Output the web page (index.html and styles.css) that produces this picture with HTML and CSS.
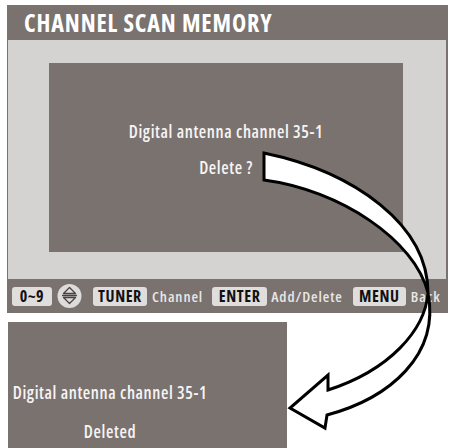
FILE: index.html
```html
<!DOCTYPE html>
<html>
<head>
<meta charset="utf-8">
<link rel="stylesheet" href="styles.css">
</head>
<body>
<div class="page">
  <div class="screen">
    <div class="title">CHANNEL SCAN MEMORY</div>
    <div class="body">
      <div class="dialog">
        <div class="line first">Digital antenna channel 35-1</div>
        <div class="line">Delete ?</div>
      </div>
    </div>
    <div class="bar">
      <span class="key k09">0~9</span>
      <span class="updown">
        <svg width="25" height="24" viewBox="0 0 25 24">
          <circle cx="12.5" cy="12" r="12" fill="#dedbdb"/>
          <path d="M5 11.5 H20 M6.5 9.5 L12.5 3.5 L18.5 9.5 Z M6.5 13.5 L12.5 19.5 L18.5 13.5 Z" fill="none" stroke="#4a4341" stroke-width="1.3" stroke-linejoin="round"/>
        </svg>
      </span>
      <span class="key ktuner">TUNER</span>
      <span class="label lchannel">Channel</span>
      <span class="key kenter">ENTER</span>
      <span class="label ladd">Add/Delete</span>
      <span class="key kmenu">MENU</span>
      <span class="label">Back</span>
    </div>
  </div>
  <div class="result">
    <div class="result-text">
      <div class="line first">Digital antenna channel 35-1</div>
      <div class="line">Deleted</div>
    </div>
  </div>
  <svg class="arrow" width="451" height="448" viewBox="0 0 451 448">
    <path d="M264 153 C355 172 428 225 428 293 C425 330 390 370 328 390 L328 375 L290 408 L325 428 L327 415 C390 398 440 355 428 293 C415 240 340 190 264 180 Z" fill="#ffffff" stroke="#000000" stroke-width="3" stroke-linejoin="miter"/>
  </svg>
</div>
</body>
</html>
```

FILE: styles.css
```css
html, body {
  margin: 0;
  padding: 0;
  background: #ffffff;
}
body {
  width: 451px;
  height: 448px;
  overflow: hidden;
  font-family: "Open Sans", "Liberation Sans", sans-serif;
  font-stretch: 87.5%;
}
.page {
  position: relative;
  width: 451px;
  height: 448px;
  padding-top: 5px;
  box-sizing: border-box;
}
.screen {
  width: 441px;
  margin-left: 7px;
  background: #7a726f;
}
.title {
  height: 35px;
  box-sizing: border-box;
  padding-left: 17px;
  color: #ffffff;
  font-weight: 700;
  font-size: 24px;
  letter-spacing: 0.9px;
  line-height: 35px;
}
.body {
  margin: 0 2px 0 1px;
  background: #d5d2d2;
  padding: 23px 43px 27px 41px;
}
.dialog {
  height: 189px;
  background: #7a726f;
  color: #f6f4f4;
  text-align: center;
  font-weight: 600;
  font-size: 17px;
  letter-spacing: 0.6px;
  padding-top: 57px;
  box-sizing: border-box;
}
.line {
  line-height: 24px;
}
.dialog .first {
  margin-bottom: 12px;
}
.bar {
  height: 34px;
  display: flex;
  align-items: center;
  padding-left: 5px;
  color: #e8e6e6;
  font-size: 15px;
  font-weight: 600;
  letter-spacing: 0.9px;
}
.key {
  display: flex;
  align-items: center;
  justify-content: center;
  height: 19px;
  background: #e0dddd;
  color: #111111;
  border-radius: 3px;
  font-weight: 700;
  font-size: 16px;
  letter-spacing: 0.6px;
}
.k09 { width: 40px; margin-right: 5px; }
.updown { display: flex; margin-right: 11px; }
.ktuner { width: 54px; margin-right: 5px; }
.lchannel { margin-right: 9px; }
.kenter { width: 55px; margin-right: 4px; }
.ladd { margin-right: 10px; }
.kmenu { width: 53px; margin-right: 5px; }
.result {
  margin-top: 9px;
  margin-left: 8px;
  width: 279px;
  height: 126px;
  background: #7a726f;
  color: #f6f4f4;
  font-weight: 600;
  font-size: 17px;
  letter-spacing: 0.6px;
  padding-top: 59px;
  box-sizing: border-box;
}
.result-text {
  width: 204px;
  text-align: center;
}
.result .first {
  margin-bottom: 15px;
}
.arrow {
  position: absolute;
  left: 0;
  top: 0;
  pointer-events: none;
}
```
